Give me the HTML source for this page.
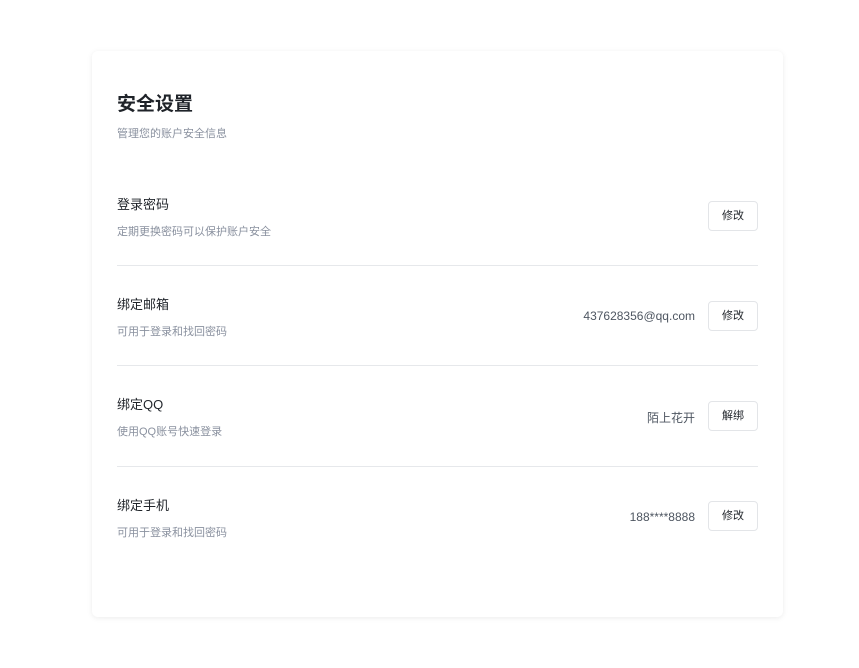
<!DOCTYPE html>
<html><head><meta charset="utf-8"><style>
*{margin:0;padding:0;box-sizing:border-box}
body{width:859px;height:668px;background:#fff;font-family:"Liberation Sans","Noto Sans CJK SC",sans-serif;position:relative;overflow:hidden}
.card{position:absolute;left:92px;top:51px;width:691px;height:566px;background:#fff;border-radius:6px;box-shadow:0 1px 6px rgba(0,0,0,0.08)}
.h{position:absolute;left:25px;top:38px;font-size:19px;font-weight:bold;color:#1f2329}
.sub{position:absolute;left:25px;top:74px;font-size:11px;color:#8a919f}
.row{position:absolute;left:25px;width:641px;height:100px}
.t{position:absolute;left:0;top:-1px;font-size:13px;color:#1f2329}
.d{position:absolute;left:0;top:28px;font-size:11px;color:#8a919f}
.v{position:absolute;right:63px;top:14px;font-size:12px;color:#4e5661}
.b{position:absolute;right:0;top:0;width:50px;height:30px;border:1px solid #e3e5e8;border-radius:4px;font-size:11px;color:#1f2329;text-align:center;line-height:29px}
.line{position:absolute;left:0;right:0;top:64px;height:1px;background:#e6e8eb}
</style></head><body>
<div class="card">
<div class="h">安全设置</div>
<div class="sub">管理您的账户安全信息</div>
<div class="row" style="top:144px"><div class="t">登录密码</div><div class="d">定期更换密码可以保护账户安全</div><div class="b" style="top:6px">修改</div><div class="line" style="top:70px"></div></div>
<div class="row" style="top:244px"><div class="t">绑定邮箱</div><div class="d">可用于登录和找回密码</div><div class="v">437628356@qq.com</div><div class="b" style="top:6px">修改</div><div class="line" style="top:70px"></div></div>
<div class="row" style="top:344px"><div class="t">绑定QQ</div><div class="d">使用QQ账号快速登录</div><div class="v">陌上花开</div><div class="b" style="top:6px">解绑</div><div class="line" style="top:71px"></div></div>
<div class="row" style="top:445px"><div class="t">绑定手机</div><div class="d">可用于登录和找回密码</div><div class="v">188****8888</div><div class="b" style="top:5px">修改</div></div>
</div>
</body></html>
